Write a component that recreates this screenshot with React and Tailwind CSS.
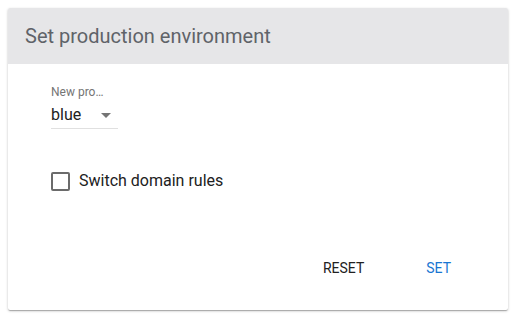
export default function App() {
  return (
    <div className="w-[516px] h-[319px] bg-white p-2" style={{ fontFamily: "Roboto, 'Liberation Sans', sans-serif" }}>
      <div className="w-[500px] h-[302px] bg-white rounded-[2px] shadow-[0_1px_3px_rgba(0,0,0,0.2),0_1px_1px_rgba(0,0,0,0.14),0_2px_1px_-1px_rgba(0,0,0,0.12)] flex flex-col overflow-hidden">
        <div className="h-[56px] bg-[#e6e6e8] flex items-center px-[17px] shrink-0">
          <span className="text-[20px] text-[#5f6368] leading-none">Set production environment</span>
        </div>
        <div className="flex-1 flex flex-col px-[43px] pt-[21px]">
          <div className="flex flex-col w-[67px]">
            <span className="text-[12px] text-[#757575] leading-[14px] truncate">New pro…</span>
            <div className="flex items-center justify-between h-[30px] border-b border-[#e0e0e0] pt-[2px]">
              <span className="text-[16px] text-[#212121] leading-none">blue</span>
              <svg width="24" height="24" viewBox="0 0 24 24" className="mr-0"><path d="M7 10l5 5 5-5z" fill="#757575" /></svg>
            </div>
          </div>
          <div className="flex items-center mt-[40px] gap-[9px]">
            <div className="w-[19px] h-[19px] border-2 border-[#6b6b6b] rounded-[2px]" />
            <span className="text-[16px] text-[#212121]">Switch domain rules</span>
          </div>
          <div className="flex-1" />
          <div className="flex justify-end items-center pb-[24px] mr-[-2px]">
            <button className="text-[14px] text-[#212121] uppercase px-4 h-[36px]">Reset</button>
            <button className="text-[14px] text-[#1976d2] uppercase px-4 h-[36px] ml-[30px]">Set</button>
          </div>
        </div>
      </div>
    </div>
  );
}
